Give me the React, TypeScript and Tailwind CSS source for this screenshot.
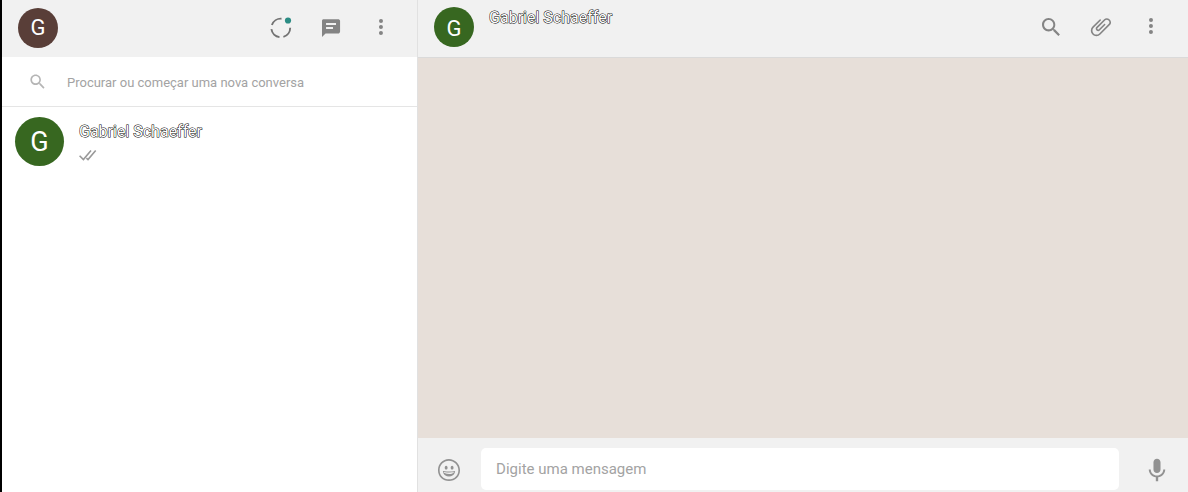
import type { ReactNode } from "react";

const PATHS = {
  chat: "M19.005 3.175H4.674C3.642 3.175 3 3.789 3 4.821V21.02l3.544-3.514h12.461c1.033 0 2.064-1.06 2.064-2.093V4.821c-.001-1.032-1.032-1.646-2.064-1.646zm-4.989 9.869H7.041V11.1h6.975v1.944zm3-4H7.041V7.1h9.975v1.944z",
  menu: "M12 7a2 2 0 1 0-.001-4.001A2 2 0 0 0 12 7zm0 2a2 2 0 1 0-.001 3.999A2 2 0 0 0 12 9zm0 6a2 2 0 1 0-.001 3.999A2 2 0 0 0 12 15z",
  search: "M15.9 14.3H15l-.3-.3c1-1.1 1.6-2.7 1.6-4.3 0-3.7-3-6.7-6.7-6.7S3 6 3 9.7s3 6.7 6.7 6.7c1.6 0 3.2-.6 4.3-1.6l.3.3v.8l5.1 5.1 1.5-1.5-5-5.2zm-6.2 0c-2.6 0-4.6-2.1-4.6-4.6s2.1-4.6 4.6-4.6 4.6 2.1 4.6 4.6-2 4.6-4.6 4.6z",
  attach: "M1.816 15.556v.002c0 1.502.584 2.912 1.646 3.972s2.472 1.647 3.974 1.647a5.58 5.58 0 0 0 3.972-1.645l9.547-9.548c.769-.768 1.147-1.767 1.058-2.817-.079-.968-.548-1.927-1.319-2.698-1.594-1.592-4.068-1.711-5.517-.262l-7.916 7.915c-.881.881-.792 2.25.214 3.261.959.958 2.423 1.053 3.263.215l5.511-5.512c.28-.28.267-.722.053-.936l-.244-.244c-.191-.191-.567-.349-.957.04l-5.506 5.506c-.18.18-.635.127-.976-.214-.098-.097-.576-.613-.213-.973l7.915-7.917c.818-.817 2.267-.699 3.23.262.5.501.802 1.1.849 1.685.051.573-.156 1.111-.589 1.543l-9.547 9.549a3.97 3.97 0 0 1-2.829 1.171 3.975 3.975 0 0 1-2.83-1.173 3.973 3.973 0 0 1-1.172-2.828c0-1.071.415-2.076 1.172-2.83l7.209-7.211c.157-.157.264-.579.028-.814L11.5 4.36a.572.572 0 0 0-.834.018l-7.205 7.207a5.577 5.577 0 0 0-1.645 3.971z",
  emoji: "M9.153 11.603c.795 0 1.439-.879 1.439-1.962s-.644-1.962-1.439-1.962-1.439.879-1.439 1.962.644 1.962 1.439 1.962zm-3.204 1.362c-.026-.307-.131 5.218 6.063 5.551 6.066-.25 6.066-5.551 6.066-5.551-6.078 1.416-12.129 0-12.129 0zm11.363 1.108s-.669 1.959-5.051 1.959c-3.505 0-5.388-1.164-5.607-1.959 0 0 5.912 1.055 10.658 0zM11.804 1.011C5.609 1.011.978 6.033.978 12.228s4.826 10.761 11.021 10.761S23.02 18.423 23.02 12.228c.001-6.195-5.021-11.217-11.216-11.217zM12 21.354c-5.273 0-9.381-3.886-9.381-9.159s3.942-9.548 9.215-9.548 9.548 4.275 9.548 9.548c-.001 5.272-4.109 9.159-9.382 9.159zm3.108-9.751c.795 0 1.439-.879 1.439-1.962s-.644-1.962-1.439-1.962-1.439.879-1.439 1.962.644 1.962 1.439 1.962z",
  mic: "M11.999 14.942c2.001 0 3.531-1.53 3.531-3.531V4.35c0-2.001-1.53-3.531-3.531-3.531S8.469 2.35 8.469 4.35v7.061c0 2.001 1.53 3.531 3.53 3.531zm6.238-3.53c0 3.531-2.942 6.002-6.237 6.002s-6.237-2.471-6.237-6.002H3.761c0 4.001 3.178 7.297 7.061 7.885v3.884h2.354v-3.884c3.884-.588 7.061-3.884 7.061-7.885h-2z",
};

function Icon({ name, className = "size-6" }: { name: keyof typeof PATHS; className?: string }) {
  return (
    <svg viewBox="0 0 24 24" fill="currentColor" className={className} aria-hidden="true">
      <path d={PATHS[name]} />
    </svg>
  );
}

function StatusIcon() {
  return (
    <svg viewBox="0 0 24 24" fill="none" className="size-6 overflow-visible" aria-hidden="true">
      <g stroke="#737373" strokeWidth="1.9">
        <path d="M2.9 9A9.4 9.4 0 0 1 12.5 2.7" />
        <path d="M2.4 13.2A9.4 9.4 0 0 0 10.5 21.1" />
        <path d="M14.4 20.9A9.4 9.4 0 0 0 21.2 11.8" />
      </g>
      <circle cx="19" cy="4.5" r="3.1" fill="#2b8c84" />
    </svg>
  );
}

function IconButton({ label, children }: { label: string; children: ReactNode }) {
  return (
    <button type="button" aria-label={label} className="flex size-6 items-center justify-center">
      {children}
    </button>
  );
}

function Avatar({ className }: { className: string }) {
  return (
    <div className={`flex shrink-0 items-center justify-center rounded-full text-white ${className}`}>G</div>
  );
}

function ContactName() {
  return (
    <h2 className="text-base leading-5 text-white [-webkit-text-stroke:1px_#000000] [paint-order:stroke_fill]">
      Gabriel Schaeffer
    </h2>
  );
}

export default function App() {
  return (
    <div className="flex h-screen border-l-2 border-black bg-white font-[Roboto,sans-serif] text-[#848484]">
      <aside className="flex w-[35%] shrink-0 flex-col">
        <header className="flex h-[57px] shrink-0 items-center justify-between bg-[#f1f1f1] pr-6 pb-0.5 pl-4">
          <Avatar className="size-10 bg-[#593e38] text-[22px]" />
          <div className="flex gap-[26px]">
            <IconButton label="Status"><StatusIcon /></IconButton>
            <IconButton label="Nova conversa"><Icon name="chat" /></IconButton>
            <IconButton label="Menu"><Icon name="menu" /></IconButton>
          </div>
        </header>
        <label className="flex h-[50px] shrink-0 items-center gap-5 border-b border-[#e5e5e5] pr-4 pl-[26px]">
          <Icon name="search" className="size-[19px] shrink-0 text-[#b5b5b5]" />
          <input
            type="text"
            aria-label="Procurar conversa"
            placeholder="Procurar ou começar uma nova conversa"
            className="min-w-0 flex-1 pt-0.5 text-[13px] outline-none placeholder:text-[#a3a3a3]"
          />
        </label>
        <ul>
          <li>
            <a href="#gabriel" className="flex items-center gap-[15px] px-[13px] py-2.5">
              <Avatar className="size-[49px] bg-[#376720] pt-0.5 text-[27px]" />
              <div className="pt-0.5">
                <ContactName />
                <svg viewBox="0 0 18 18" fill="none" stroke="#999999" strokeWidth="1.6" className="mt-1 size-[18px]" aria-hidden="true">
                  <path d="M.6 9.8 4.4 13.6 12 4.5M7.4 12.2 9 13.6 16.7 4.5" />
                </svg>
              </div>
            </a>
          </li>
        </ul>
      </aside>
      <main className="flex min-w-0 flex-1 flex-col border-l border-[#e1e1e1]">
        <header className="flex h-[58px] shrink-0 items-center gap-[15px] border-b border-[#dadada] bg-[#f1f1f1] pr-[25px] pb-[3px] pl-4">
          <Avatar className="size-10 bg-[#376720] pt-0.5 text-[22px]" />
          <div className="flex-1 self-start pt-2">
            <ContactName />
          </div>
          <div className="flex gap-[26px]">
            <IconButton label="Procurar"><Icon name="search" /></IconButton>
            <IconButton label="Anexar"><Icon name="attach" /></IconButton>
            <IconButton label="Menu da conversa"><Icon name="menu" /></IconButton>
          </div>
        </header>
        <section aria-label="Mensagens" className="flex-1 bg-[#e7dfd9]" />
        <footer className="flex h-[54px] shrink-0 items-start gap-5 bg-[#f1f1f1] px-[19px] pt-2.5 text-[#929292]">
          <div className="flex h-11 items-center"><IconButton label="Emojis"><Icon name="emoji" /></IconButton></div>
          <input
            type="text"
            aria-label="Mensagem"
            placeholder="Digite uma mensagem"
            className="h-[42px] min-w-0 flex-1 rounded-[5px] bg-white px-[15px] text-[15px] outline-none placeholder:text-[#a3a3a3]"
          />
          <div className="flex h-11 items-center pl-1.5"><IconButton label="Gravar áudio"><Icon name="mic" /></IconButton></div>
        </footer>
      </main>
    </div>
  );
}
